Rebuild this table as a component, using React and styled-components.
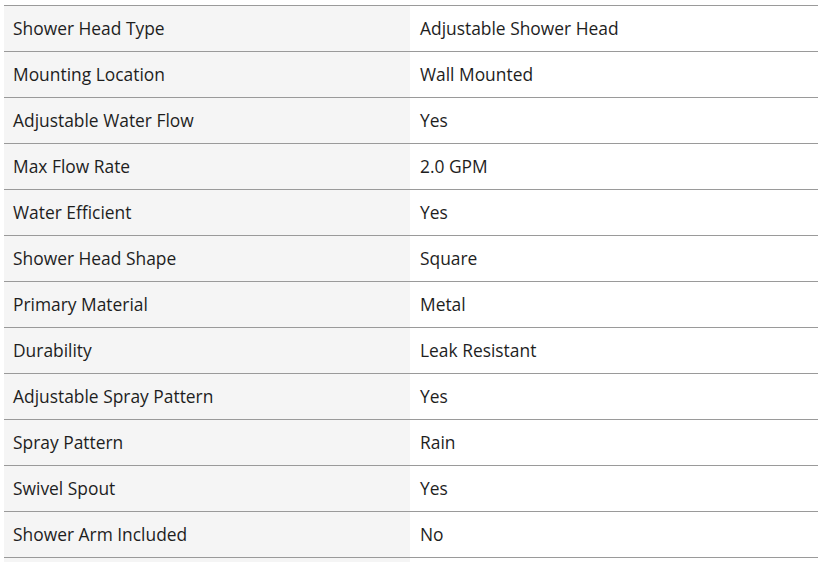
import React from "react";
import styled, { createGlobalStyle } from "styled-components";

const Global = createGlobalStyle`
  html, body { margin: 0; padding: 0; background: #ffffff; }
  body { font-family: "Open Sans", "Noto Sans", sans-serif; }
`;

const Page = styled.div`
  padding: 5px 12px 10px 4px;
`;

const Table = styled.div`
  display: grid;
  grid-template-columns: 406px 408px;
  border-top: 1px solid #9a9a9a;
  background: linear-gradient(to right, #f5f5f5 0 406px, #ffffff 406px);
  padding-bottom: 8px;
`;

const Cell = styled.div`
  box-sizing: border-box;
  height: 46px;
  display: flex;
  align-items: center;
  padding-left: ${(p) => (p.$value ? "10px" : "9px")};
  padding-bottom: 1px;
  border-bottom: 1px solid #9a9a9a;
  background: ${(p) => (p.$value ? "#ffffff" : "#f5f5f5")};
  color: #1e1e1e;
  font-size: 17.4px;
`;

const rows = [
  ["Shower Head Type", "Adjustable Shower Head"],
  ["Mounting Location", "Wall Mounted"],
  ["Adjustable Water Flow", "Yes"],
  ["Max Flow Rate", "2.0 GPM"],
  ["Water Efficient", "Yes"],
  ["Shower Head Shape", "Square"],
  ["Primary Material", "Metal"],
  ["Durability", "Leak Resistant"],
  ["Adjustable Spray Pattern", "Yes"],
  ["Spray Pattern", "Rain"],
  ["Swivel Spout", "Yes"],
  ["Shower Arm Included", "No"],
];

export default function App() {
  return (
    <>
      <Global />
      <Page>
        <Table>
          {rows.map(([k, v]) => (
            <React.Fragment key={k}>
              <Cell>{k}</Cell>
              <Cell $value>{v}</Cell>
            </React.Fragment>
          ))}
        </Table>
      </Page>
    </>
  );
}
